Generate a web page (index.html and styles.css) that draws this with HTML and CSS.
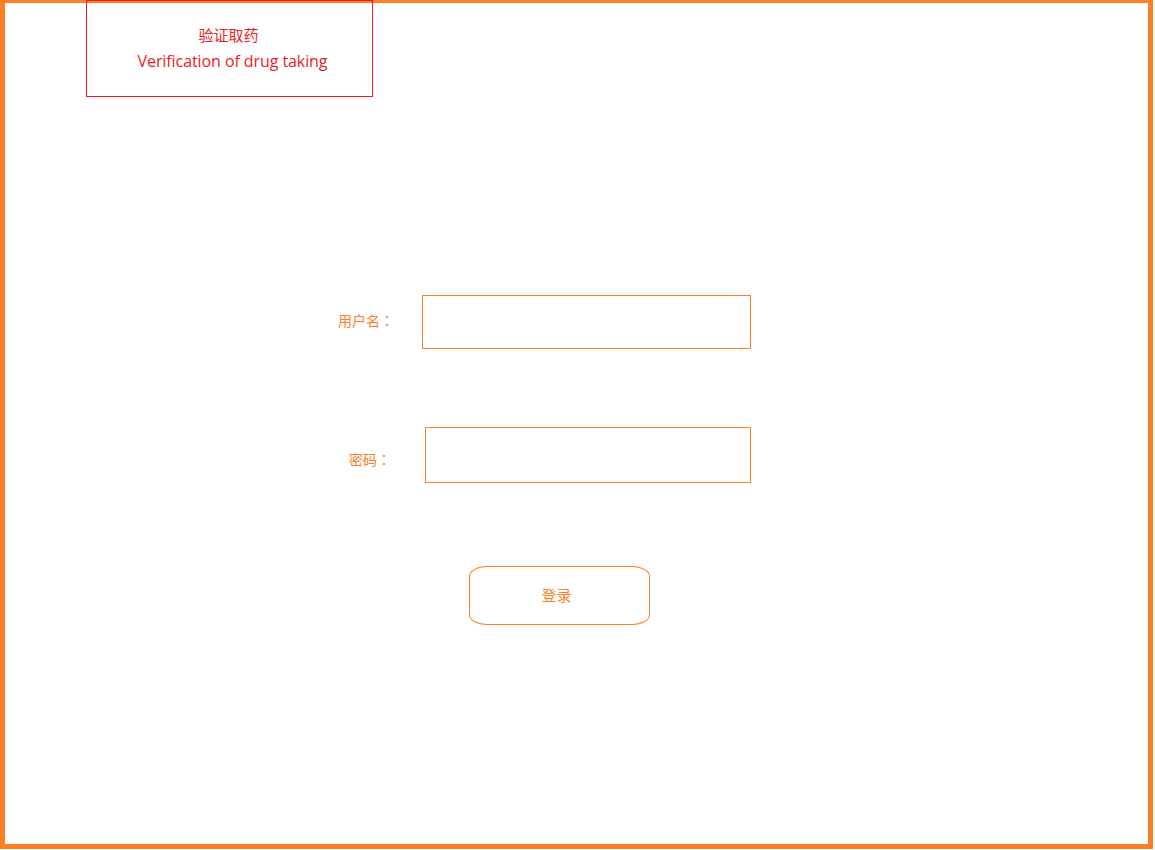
FILE: index.html
```html
<!DOCTYPE html>
<html lang="zh-CN">
<head>
<meta charset="utf-8">
<title>验证取药</title>
<link rel="stylesheet" href="styles.css">
</head>
<body>
<div class="frame">
  <div class="header">
    <div class="title-cn">验证取药</div>
    <div class="title-en">Verification of drug taking</div>
  </div>
  <div class="form">
    <div class="row row-user">
      <label class="label label-user">用户名<span class="colon" lang="zh-TW">：</span></label>
      <div class="field field-user"></div>
    </div>
    <div class="row row-pass">
      <label class="label label-pass">密码<span class="colon" lang="zh-TW">：</span></label>
      <div class="field field-pass"></div>
    </div>
    <div class="row row-btn">
      <div class="btn">登录</div>
    </div>
  </div>
</div>
</body>
</html>
```
FILE: styles.css
```css
html, body {
  margin: 0;
  padding: 0;
  background: #ffffff;
}
body {
  font-family: "Open Sans", "Noto Sans CJK SC", sans-serif;
}
.frame {
  box-sizing: border-box;
  width: 1153px;
  height: 849px;
  border-left: 5px solid #ff7f27;
  border-top: 3px solid #ff7f27;
  border-right: 5px solid #ff7f27;
  border-bottom: 5px solid #ff7f27;
}
.header {
  box-sizing: border-box;
  margin-left: 81px;
  margin-top: -3px;
  width: 287px;
  height: 97px;
  border: 1px solid #ed1c24;
  color: #ed1c24;
  text-align: center;
  padding-top: 24px;
}
.title-cn {
  font-family: "Noto Sans CJK SC", sans-serif;
  font-size: 15px;
  line-height: 20px;
  padding-right: 2px;
}
.title-en {
  font-size: 16px;
  line-height: 24px;
  margin-top: 4px;
  padding-left: 6px;
  letter-spacing: -0.08px;
}
.form {
  margin-top: 198px;
}
.row {
  display: flex;
  align-items: flex-start;
}
.label {
  font-family: "Noto Sans CJK SC", sans-serif;
  font-size: 14px;
  line-height: 20px;
  color: #ff7f27;
}
.colon {
  font-family: "Noto Sans CJK TC", "Noto Sans CJK SC", sans-serif;
}
.field {
  box-sizing: border-box;
  border: 1px solid #ff7f27;
}
.row-user {
  padding-left: 333px;
}
.label-user {
  width: 84px;
  margin-top: 15px;
}
.field-user {
  width: 329px;
  height: 54px;
}
.row-pass {
  padding-left: 344px;
  margin-top: 78px;
}
.label-pass {
  width: 76px;
  margin-top: 22px;
}
.field-pass {
  width: 326px;
  height: 56px;
}
.row-btn {
  padding-left: 464px;
  margin-top: 83px;
}
.btn {
  box-sizing: border-box;
  width: 181px;
  height: 59px;
  border: 1px solid #ff7f27;
  border-radius: 18px / 10px;
  color: #ff7f27;
  font-family: "Noto Sans CJK SC", sans-serif;
  font-size: 15px;
  line-height: 56px;
  text-align: center;
  padding-right: 6px;
}
```
